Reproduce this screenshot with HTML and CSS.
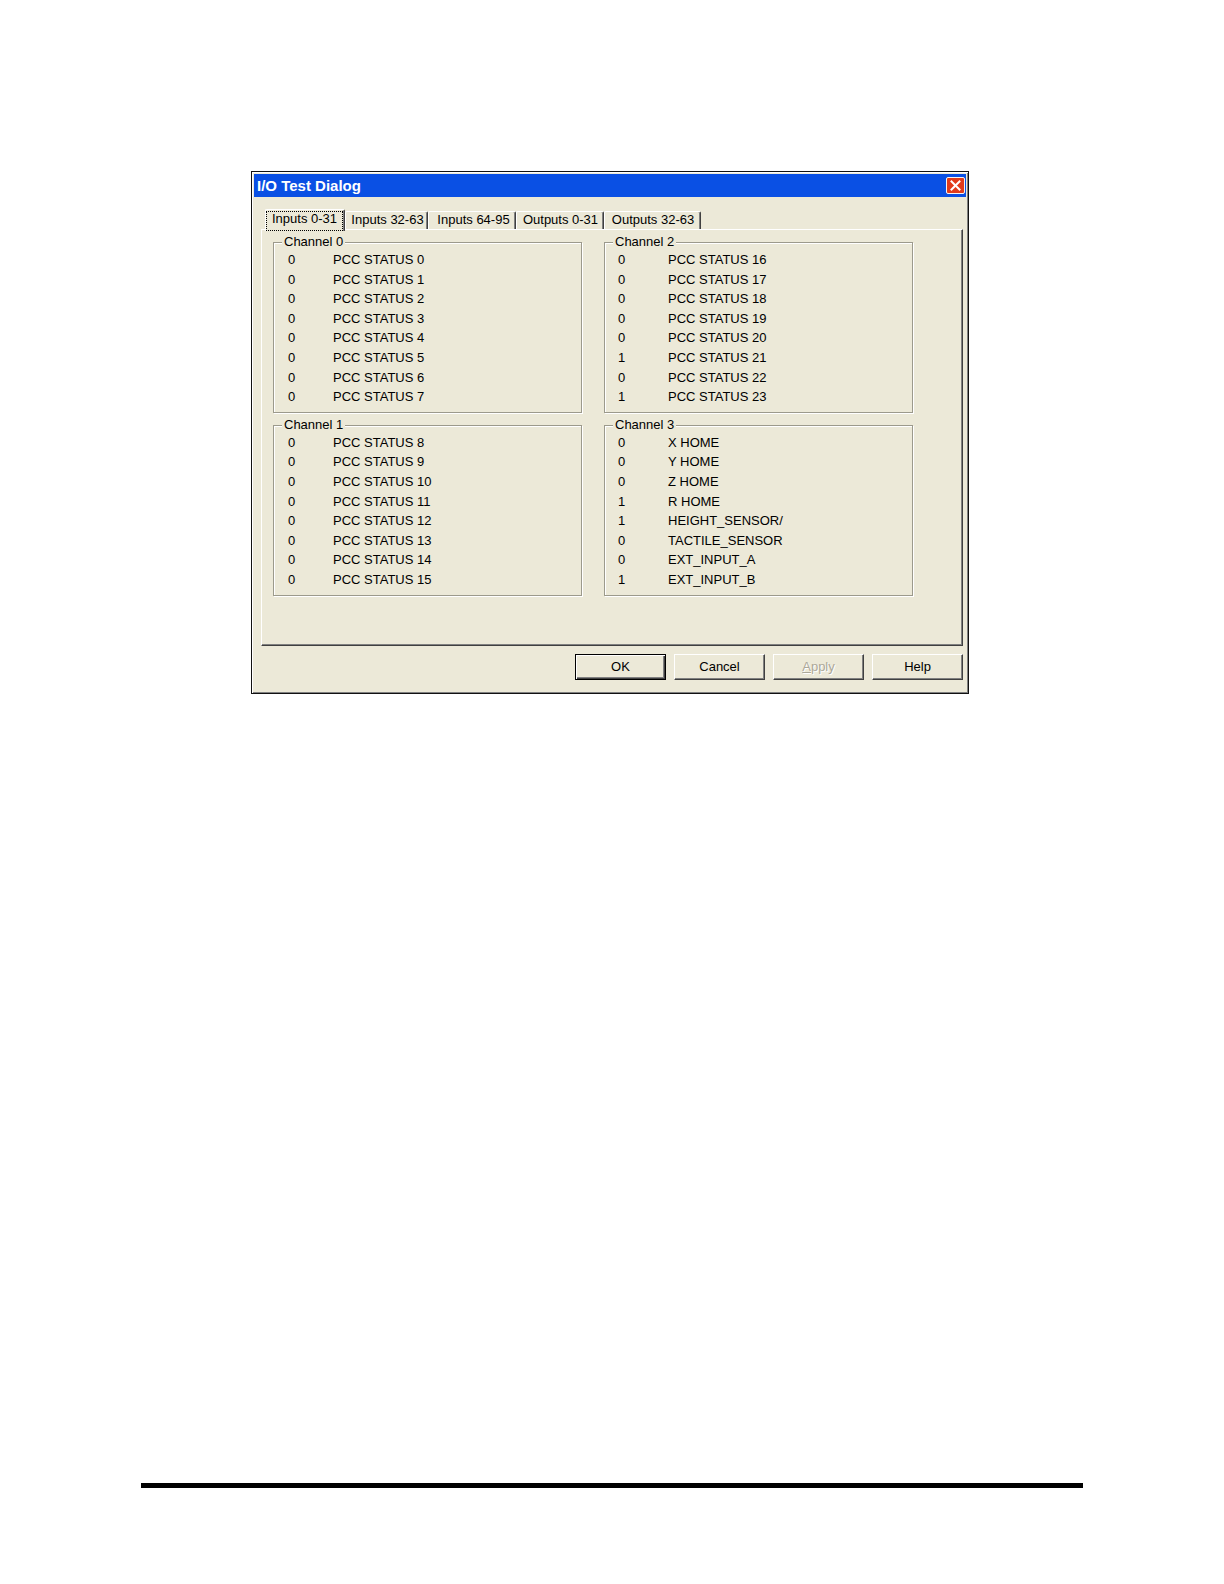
FILE: index.html
```html
<!DOCTYPE html>
<html>
<head>
<meta charset="utf-8">
<title>I/O Test Dialog</title>
<link rel="stylesheet" href="styles.css">
</head>
<body>
<div class="page">
  <div class="dialog">
    <div class="titlebar">
      <span class="title">I/O Test Dialog</span>
      <span class="close">
        <svg width="19" height="17" viewBox="0 0 19 17">
          <rect x="0.5" y="0.5" width="18" height="16" rx="1.5" fill="#e23b1b" stroke="#f4f4f4" stroke-width="1"/>
          <path d="M5.5 4.5 L13.5 12.5 M13.5 4.5 L5.5 12.5" stroke="#fff" stroke-width="2" stroke-linecap="square"/>
        </svg>
      </span>
    </div>
    <div class="client">
      <div class="tabs">
        <div class="tab active t1"><span class="focus">Inputs 0-31</span></div>
        <div class="tab t2">Inputs 32-63</div>
        <div class="tab t3">Inputs 64-95</div>
        <div class="tab t4">Outputs 0-31</div>
        <div class="tab t5">Outputs 32-63</div>
      </div>
      <div class="panel">
        <div class="groups">
          <div class="group">
            <div class="legend">Channel 0</div>
            <div class="rows">
              <span>0</span><span>PCC STATUS 0</span>
              <span>0</span><span>PCC STATUS 1</span>
              <span>0</span><span>PCC STATUS 2</span>
              <span>0</span><span>PCC STATUS 3</span>
              <span>0</span><span>PCC STATUS 4</span>
              <span>0</span><span>PCC STATUS 5</span>
              <span>0</span><span>PCC STATUS 6</span>
              <span>0</span><span>PCC STATUS 7</span>
            </div>
          </div>
          <div class="group">
            <div class="legend">Channel 2</div>
            <div class="rows right">
              <span>0</span><span>PCC STATUS 16</span>
              <span>0</span><span>PCC STATUS 17</span>
              <span>0</span><span>PCC STATUS 18</span>
              <span>0</span><span>PCC STATUS 19</span>
              <span>0</span><span>PCC STATUS 20</span>
              <span>1</span><span>PCC STATUS 21</span>
              <span>0</span><span>PCC STATUS 22</span>
              <span>1</span><span>PCC STATUS 23</span>
            </div>
          </div>
          <div class="group">
            <div class="legend">Channel 1</div>
            <div class="rows">
              <span>0</span><span>PCC STATUS 8</span>
              <span>0</span><span>PCC STATUS 9</span>
              <span>0</span><span>PCC STATUS 10</span>
              <span>0</span><span>PCC STATUS 11</span>
              <span>0</span><span>PCC STATUS 12</span>
              <span>0</span><span>PCC STATUS 13</span>
              <span>0</span><span>PCC STATUS 14</span>
              <span>0</span><span>PCC STATUS 15</span>
            </div>
          </div>
          <div class="group">
            <div class="legend">Channel 3</div>
            <div class="rows right">
              <span>0</span><span>X HOME</span>
              <span>0</span><span>Y HOME</span>
              <span>0</span><span>Z HOME</span>
              <span>1</span><span>R HOME</span>
              <span>1</span><span>HEIGHT_SENSOR/</span>
              <span>0</span><span>TACTILE_SENSOR</span>
              <span>0</span><span>EXT_INPUT_A</span>
              <span>1</span><span>EXT_INPUT_B</span>
            </div>
          </div>
        </div>
      </div>
      <div class="buttons">
        <button class="btn default">OK</button>
        <button class="btn">Cancel</button>
        <button class="btn disabled"><u>A</u>pply</button>
        <button class="btn">Help</button>
      </div>
    </div>
  </div>
  <div class="rule"></div>
</div>
</body>
</html>
```

FILE: styles.css
```css
* {
  box-sizing: border-box;
}

body {
  margin: 0;
  background: #ffffff;
  font-family: "Liberation Sans", Arial, sans-serif;
  font-size: 13px;
  color: #000;
}

.page {
  display: flex;
  flex-direction: column;
  align-items: flex-start;
  padding-top: 171px;
}

.dialog {
  margin-left: 251px;
  width: 718px;
  height: 523px;
  border: 1px solid #111;
  padding: 2px;
  background: #ece9d8;
  box-shadow: inset 1px 1px 0 #ffffff, inset -1px -1px 0 #808080;
  display: flex;
  flex-direction: column;
}

.titlebar {
  height: 23px;
  background: #0a50e4;
  display: flex;
  align-items: center;
  justify-content: space-between;
  padding: 0 1px 0 3px;
}

.title {
  color: #fff;
  font-weight: bold;
  font-size: 15px;
  line-height: 16px;
  padding-top: 1px;
}

.close {
  display: flex;
  width: 19px;
  height: 17px;
}

.client {
  flex: 1;
  display: flex;
  flex-direction: column;
  padding: 12px 3px 0 7px;
}

.tabs {
  display: flex;
  align-items: flex-end;
  height: 20px;
  padding-left: 4px;
}

.tab {
  height: 18px;
  border-top: 1px solid #ffffff;
  border-left: 1px solid #ffffff;
  border-right: 1px solid #404040;
  border-radius: 2px 2px 0 0;
  box-shadow: inset -1px 0 0 #808080;
  text-align: center;
  line-height: 16px;
  white-space: nowrap;
}

.tab.t1 { width: 80px; }
.tab.t2 { width: 83px; padding-left: 2px; }
.tab.t3 { width: 88px; padding-left: 3px; }
.tab.t4 { width: 88px; padding-left: 1px; }
.tab.t5 { width: 97px; padding-left: 1px; }

.tab.active {
  height: 22px;
  margin-bottom: -2px;
  position: relative;
  z-index: 1;
  background: #ece9d8;
  padding: 1px 1px 0 0;
}

.focus {
  display: block;
  height: 20px;
  border: 1px dotted #000;
  line-height: 13px;
}

.panel {
  height: 417px;
  border: 1px solid;
  border-color: #ffffff #404040 #404040 #ffffff;
  box-shadow: inset -1px -1px 0 #808080;
  padding: 12px 0 0 11px;
}

.groups {
  display: grid;
  grid-template-columns: 309px 309px;
  column-gap: 22px;
  row-gap: 12px;
}

.group {
  border: 1px solid #9c9a8c;
  box-shadow: inset 1px 1px 0 #ffffff, 1px 1px 0 #ffffff;
  padding-bottom: 5px;
}

.legend {
  width: fit-content;
  margin: -9px 0 0 8px;
  padding: 0 2px;
  background: #ece9d8;
  line-height: 16px;
}

.rows {
  display: grid;
  grid-template-columns: 45px auto;
  padding-left: 14px;
  line-height: 19.6px;
}

.rows.right {
  grid-template-columns: 50px auto;
  padding-left: 13px;
}

.buttons {
  display: flex;
  justify-content: flex-end;
  gap: 8px;
  margin-top: 8px;
}

.btn {
  width: 91px;
  height: 26px;
  padding: 0;
  font-family: "Liberation Sans", Arial, sans-serif;
  font-size: 13px;
  color: #000;
  background: #ece9d8;
  border: 1px solid;
  border-color: #ffffff #404040 #404040 #ffffff;
  box-shadow: inset -1px -1px 0 #808080;
  border-radius: 0;
  line-height: 22px;
}

.btn.default {
  border: 1px solid #000;
  box-shadow: inset 1px 1px 0 #ffffff, inset -1px -1px 0 #404040, inset -2px -2px 0 #808080;
}

.btn.disabled {
  color: #aca899;
  text-shadow: 1px 1px 0 #ffffff;
}

.rule {
  margin-top: 789px;
  margin-left: 141px;
  width: 942px;
  height: 5px;
  background: #000;
}
```
